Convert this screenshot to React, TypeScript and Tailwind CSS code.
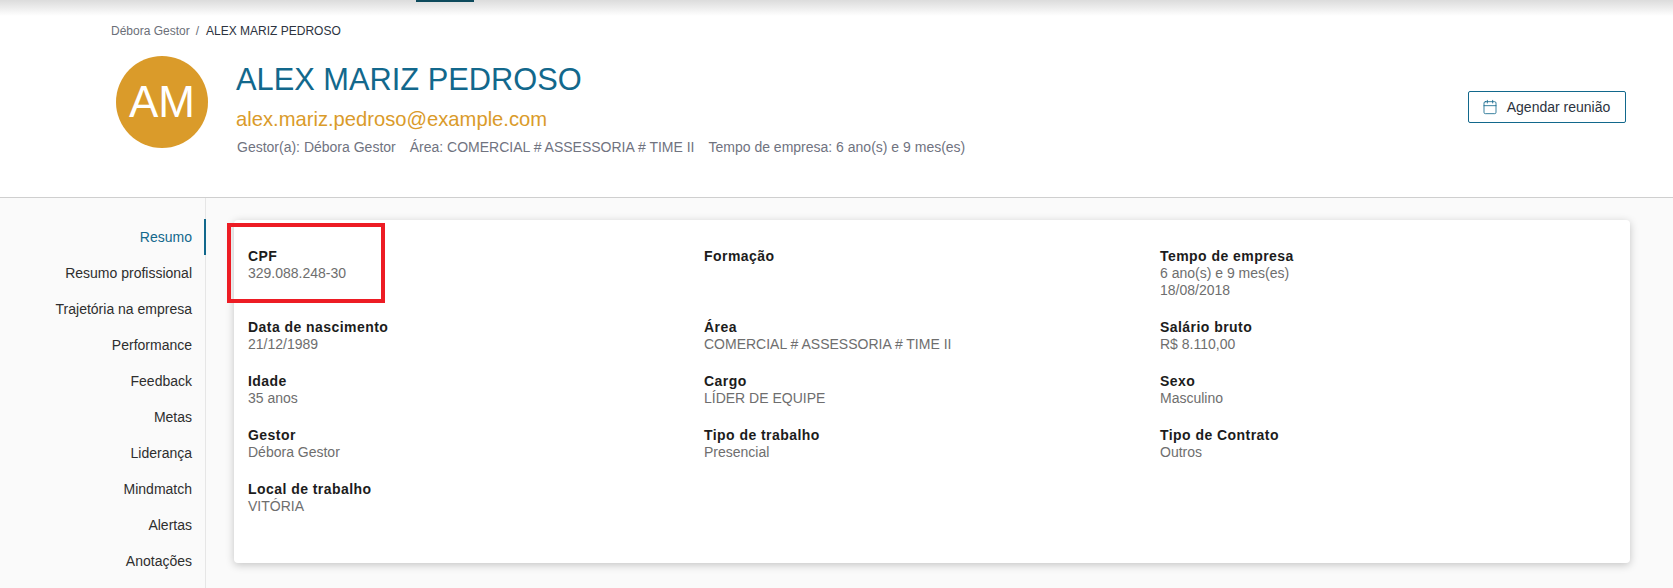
import { Calendar } from "lucide-react";

const navItems = [
  "Resumo",
  "Resumo profissional",
  "Trajetória na empresa",
  "Performance",
  "Feedback",
  "Metas",
  "Liderança",
  "Mindmatch",
  "Alertas",
  "Anotações",
];

const rows: { label: string; value: string[] }[][] = [
  [
    { label: "CPF", value: ["329.088.248-30"] },
    { label: "Formação", value: [] },
    { label: "Tempo de empresa", value: ["6 ano(s) e 9 mes(es)", "18/08/2018"] },
  ],
  [
    { label: "Data de nascimento", value: ["21/12/1989"] },
    { label: "Área", value: ["COMERCIAL # ASSESSORIA # TIME II"] },
    { label: "Salário bruto", value: ["R$ 8.110,00"] },
  ],
  [
    { label: "Idade", value: ["35 anos"] },
    { label: "Cargo", value: ["LÍDER DE EQUIPE"] },
    { label: "Sexo", value: ["Masculino"] },
  ],
  [
    { label: "Gestor", value: ["Débora Gestor"] },
    { label: "Tipo de trabalho", value: ["Presencial"] },
    { label: "Tipo de Contrato", value: ["Outros"] },
  ],
  [{ label: "Local de trabalho", value: ["VITÓRIA"] }],
];

function Field({ label, value }: { label: string; value: string[] }) {
  return (
    <div>
      <p className="text-[14px] leading-[18px] font-bold tracking-[0.45px] text-[#1c1c1c]">{label}</p>
      {value.map((line) => (
        <p key={line} className="text-[14px] leading-[17px] text-[#6e6e6e]">
          {line}
        </p>
      ))}
    </div>
  );
}

export default function App() {
  return (
    <div className="h-[588px] overflow-hidden bg-[#fafafa] font-['Liberation_Sans',Arial,sans-serif]">
      {/* Header */}
      <header className="relative h-[198px] border-b border-[#cfcfcf] bg-white">
        <div className="absolute top-0 left-[416px] h-[2px] w-[58px] bg-[#0d4a5c]" />
        <div className="h-[16px] bg-gradient-to-b from-[#dcdcdc] to-white" />

        <div className="pl-[111px]">
          <p className="pt-[7px] text-[12px] leading-[16px] text-[#6b6f78]">
            Débora Gestor<span className="mx-[6px]">/</span>
            <span className="ml-[1px] text-[#2c3340]">ALEX MARIZ PEDROSO</span>
          </p>

          <div className="flex items-start pr-[47px] pt-[17px] pl-[5px]">
            <div className="flex h-[92px] w-[92px] shrink-0 items-center justify-center rounded-full bg-[#da9b2a] text-[44px] text-white">
              AM
            </div>
            <div className="ml-[28px] flex-1">
              <h1 className="pt-[6px] text-[30.8px] leading-[36px] text-[#12688c]">ALEX MARIZ PEDROSO</h1>
              <p className="pt-[9px] text-[20.2px] leading-[24px] text-[#da9b2a]">alex.mariz.pedroso@example.com</p>
              <p className="flex gap-[14px] pt-[8px] pl-[1px] text-[14px] leading-[17px] text-[#70737f]">
                <span>Gestor(a): Débora Gestor</span>
                <span>Área: COMERCIAL # ASSESSORIA # TIME II</span>
                <span>Tempo de empresa: 6 ano(s) e 9 mes(es)</span>
              </p>
            </div>
            <button className="mt-[35px] flex h-[32px] w-[158px] items-center justify-center gap-[9px] rounded-[2px] border border-[#12688c] bg-white pr-[2px] text-[14px] text-[#2c3340]">
              <Calendar size={16} strokeWidth={1.25} className="text-[#12688c]" />
              Agendar reunião
            </button>
          </div>
        </div>
      </header>

      {/* Body */}
      <div className="flex h-[390px]">
        <nav className="h-full w-[206px] shrink-0 border-r border-[#e6e6e6] pt-[21px]">
          {navItems.map((item, i) => (
            <div
              key={item}
              className={
                i === 0
                  ? "relative flex h-[36px] items-center justify-end pr-[13px] text-[14px] text-[#12688c]"
                  : "flex h-[36px] items-center justify-end pr-[13px] text-[14px] text-[#2e2e2e]"
              }
            >
              {item}
              {i === 0 && <span className="absolute top-0 right-[-1px] h-[36px] w-[2px] bg-[#12688c]" />}
            </div>
          ))}
        </nav>

        <main className="relative pt-[22px] pl-[28px]">
          <div className="h-[343px] w-[1396px] rounded-[4px] bg-white px-[14px] pt-[27px] shadow-[0_2px_8px_rgba(0,0,0,0.22)]">
            {rows.map((row) => (
              <div key={row[0].label} className="grid grid-cols-3 pb-[19px]">
                {row.map((field) => (
                  <Field key={field.label} label={field.label} value={field.value} />
                ))}
              </div>
            ))}
          </div>
          {/* Red annotation box */}
          <div className="absolute top-[25px] left-[21px] h-[80px] w-[158px] border-4 border-[#ed1c24]" />
        </main>
      </div>
    </div>
  );
}
